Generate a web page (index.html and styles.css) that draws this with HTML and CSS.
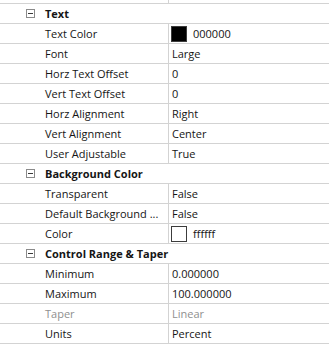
FILE: index.html
```html
<!DOCTYPE html>
<html lang="en">
<head>
    <meta charset="UTF-8">
    <title>Properties</title>
    <link rel="stylesheet" href="styles.css">
</head>
<body>
    <div class="grid">
        <div class="row stub"><div class="name"></div><div class="value"></div></div>

        <div class="row group"><span class="toggle"></span><span class="title">Text</span></div>
        <div class="row"><div class="name">Text Color</div><div class="value"><span class="swatch black"></span>000000</div></div>
        <div class="row"><div class="name">Font</div><div class="value">Large</div></div>
        <div class="row"><div class="name">Horz Text Offset</div><div class="value">0</div></div>
        <div class="row"><div class="name">Vert Text Offset</div><div class="value">0</div></div>
        <div class="row"><div class="name">Horz Alignment</div><div class="value">Right</div></div>
        <div class="row"><div class="name">Vert Alignment</div><div class="value">Center</div></div>
        <div class="row"><div class="name">User Adjustable</div><div class="value">True</div></div>

        <div class="row group"><span class="toggle"></span><span class="title">Background Color</span></div>
        <div class="row"><div class="name">Transparent</div><div class="value">False</div></div>
        <div class="row"><div class="name" title="Default Background Color">Default Background ...</div><div class="value">False</div></div>
        <div class="row"><div class="name">Color</div><div class="value"><span class="swatch white"></span>ffffff</div></div>

        <div class="row group"><span class="toggle"></span><span class="title">Control Range &amp; Taper</span></div>
        <div class="row"><div class="name">Minimum</div><div class="value">0.000000</div></div>
        <div class="row"><div class="name">Maximum</div><div class="value">100.000000</div></div>
        <div class="row disabled"><div class="name">Taper</div><div class="value">Linear</div></div>
        <div class="row"><div class="name">Units</div><div class="value">Percent</div></div>
    </div>
</body>
</html>
```

FILE: styles.css
```css
body {
    margin: 0;
    background-color: #ffffff;
    font-family: "Open Sans", "Noto Sans", sans-serif;
    font-size: 11px;
    color: #151515;
}

.grid {
    width: 329px;
}

.row {
    display: grid;
    grid-template-columns: 168px 1fr;
    height: 19px;
    border-bottom: 1px solid #d3d3d3;
    line-height: 19px;
}

.row.stub {
    height: 3px;
}

.name {
    padding-left: 45px;
    padding-right: 3px;
    white-space: nowrap;
    overflow: hidden;
}

.value {
    border-left: 1px solid #d3d3d3;
    padding-left: 3px;
    display: flex;
    align-items: center;
    white-space: nowrap;
}

.disabled {
    color: #8f8f8f;
}

.group {
    display: flex;
    align-items: center;
}

.toggle {
    box-sizing: border-box;
    width: 9px;
    height: 9px;
    margin-left: 26px;
    margin-right: 10px;
    border: 1px solid #8a8a8a;
    display: flex;
    align-items: center;
    justify-content: center;
}

.toggle::before {
    content: "";
    width: 5px;
    height: 1px;
    background-color: #3a3a3a;
}

.title {
    font-weight: bold;
    white-space: nowrap;
}

.swatch {
    box-sizing: border-box;
    width: 16px;
    height: 16px;
    margin-left: -1px;
    margin-right: 6px;
    border: 1px solid #3c3c3c;
}

.swatch.black {
    background-color: #000000;
}

.swatch.white {
    background-color: #ffffff;
}
```
